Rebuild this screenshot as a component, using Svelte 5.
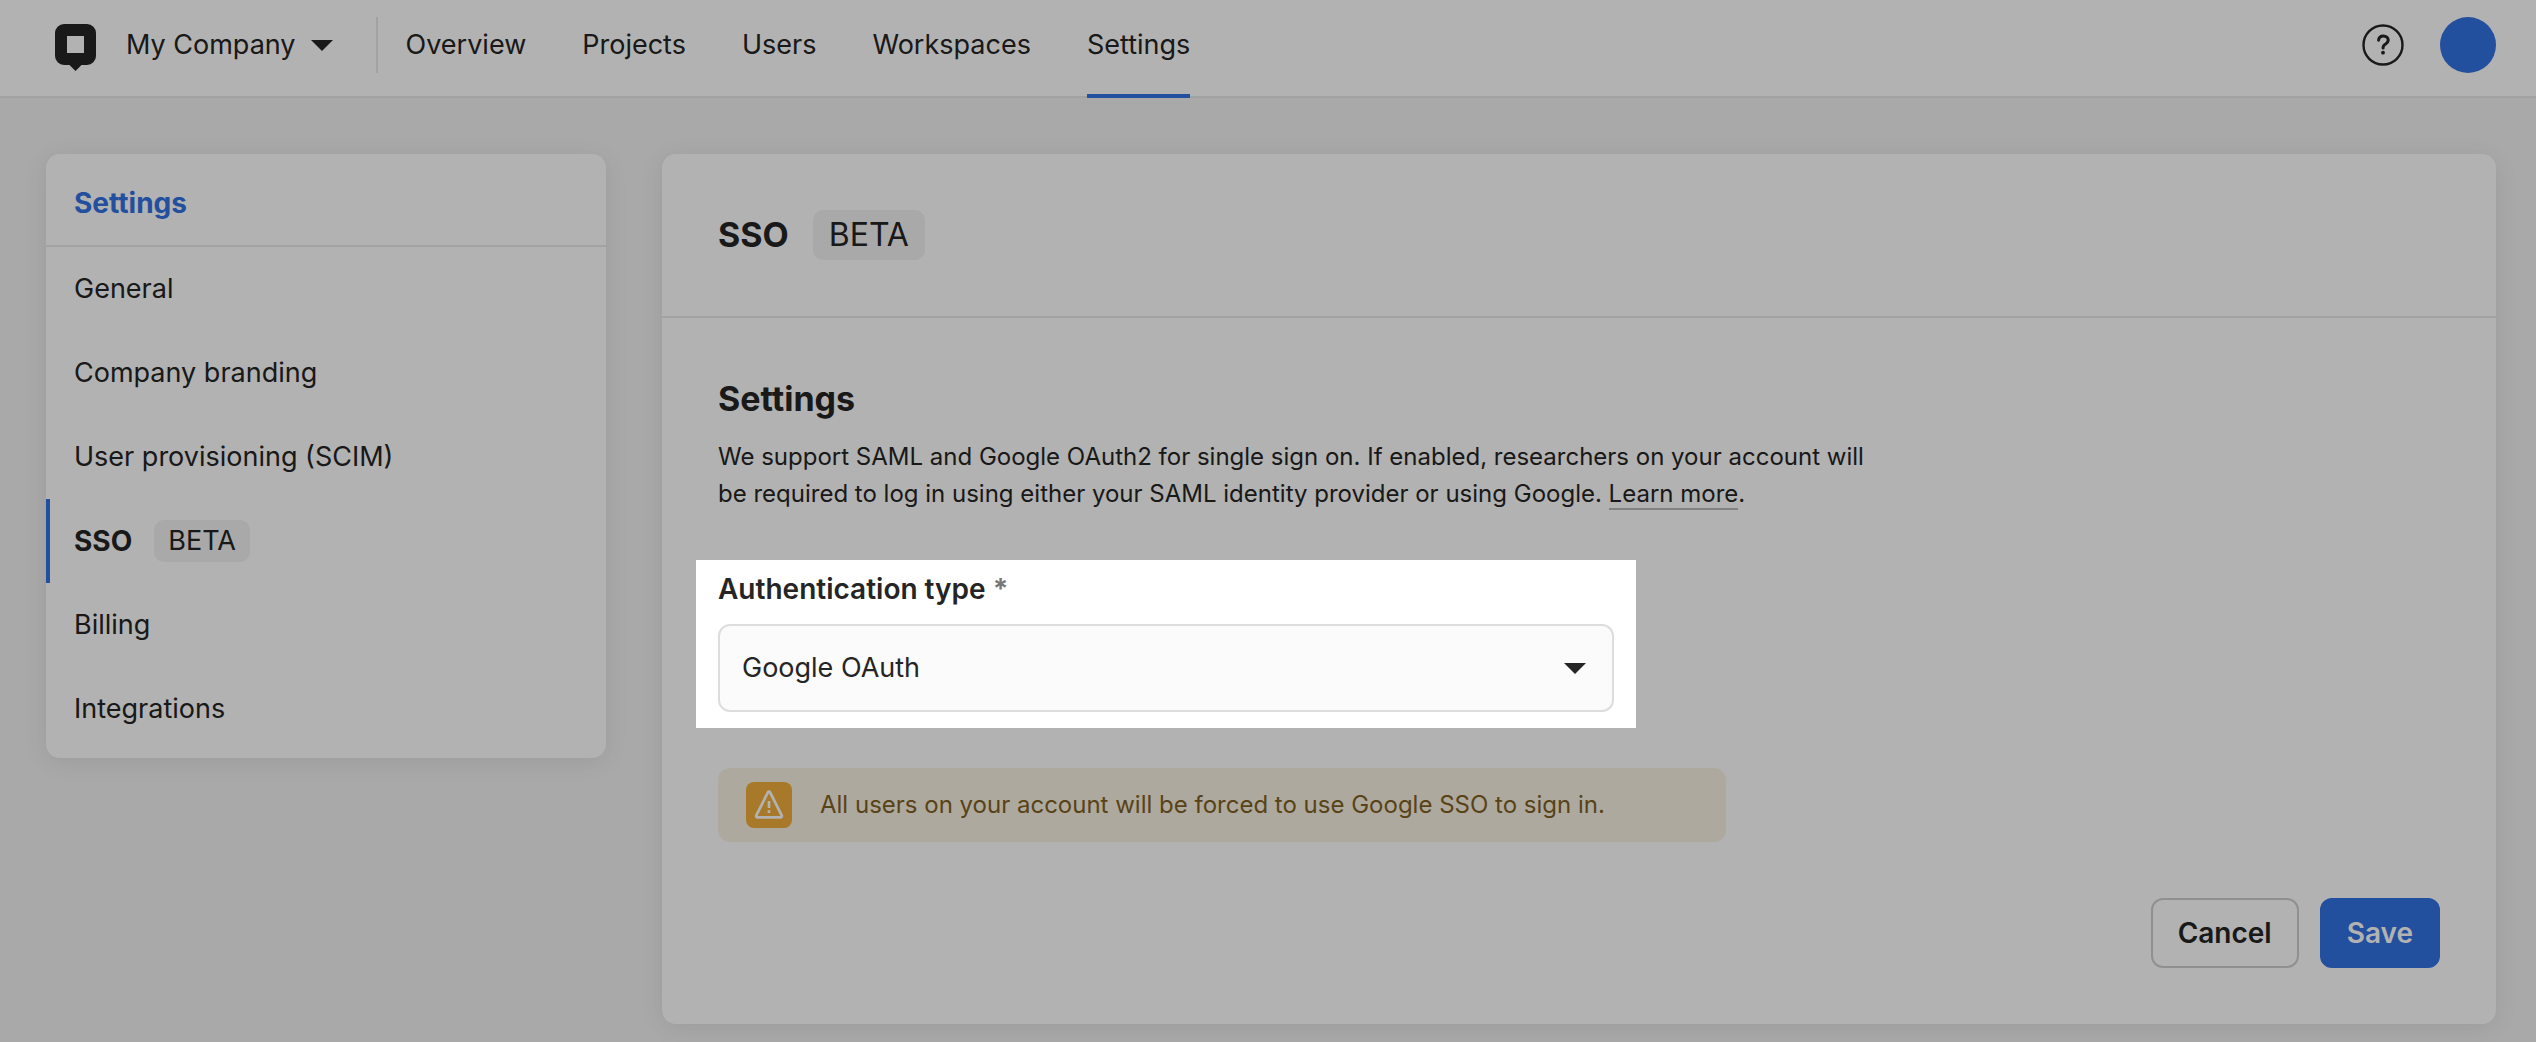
<script lang="ts">
  const tabs = ["Overview", "Projects", "Users", "Workspaces", "Settings"];
  const activeTab = "Settings";

  const sections = [
    { label: "General" },
    { label: "Company branding" },
    { label: "User provisioning (SCIM)" },
    { label: "SSO", beta: true },
    { label: "Billing" },
    { label: "Integrations" },
  ];
  const activeSection = "SSO";

  let authType = $state("google");
</script>

<header class="topbar">
  <a class="logo" href="#home" aria-label="Home">
    <svg width="41" height="54" viewBox="0 0 41 54" aria-hidden="true">
      <path
        fill="currentColor"
        fill-rule="evenodd"
        d="M9 6h23a9 9 0 0 1 9 9v23a9 9 0 0 1-9 9h-5.500l-6 6-6-6H9a9 9 0 0 1-9-9V15a9 9 0 0 1 9-9Zm3 12v17h17V18Z"
      />
    </svg>
  </a>
  <button class="company" type="button">
    My Company
    <svg width="22" height="11" viewBox="0 0 22 11" aria-hidden="true"><path fill="currentColor" d="M0 0h22L11 11Z" /></svg>
  </button>
  <nav class="tabs" aria-label="Main">
    {#each tabs as tab}
      <a href={`#${tab.toLowerCase()}`} class:active={tab === activeTab}>{tab}</a>
    {/each}
  </nav>
  <button class="help" type="button" aria-label="Help">
    <svg width="42" height="42" viewBox="0 0 42 42" fill="none" stroke="currentColor" aria-hidden="true">
      <circle cx="21" cy="21" r="19.500" stroke-width="2.400" />
      <path stroke-width="3" stroke-linecap="round" d="M16.600 16.200c.2-2.600 2.100-4.200 4.800-4.200 2.800 0 4.800 1.700 4.800 4.100 0 1.900-1 2.900-2.600 3.900-1.700 1-2.500 1.900-2.500 3.500v.4" />
      <circle cx="21" cy="28.700" r="1.900" fill="currentColor" stroke="none" />
    </svg>
  </button>
  <button class="avatar" type="button" aria-label="Account"></button>
</header>

<div class="page">
  <aside class="sidebar card">
    <h2>Settings</h2>
    <nav aria-label="Settings">
      {#each sections as section}
        <a href={`#${section.label}`} class:active={section.label === activeSection}>
          {section.label}
          {#if section.beta}<span class="badge">BETA</span>{/if}
        </a>
      {/each}
    </nav>
  </aside>

  <main class="card">
    <div class="card-head">
      <h1>SSO</h1>
      <span class="badge large">BETA</span>
    </div>

    <form class="card-body" onsubmit={(e) => e.preventDefault()}>
      <h2>Settings</h2>
      <p class="intro">
        We support SAML and Google OAuth2 for single sign on. If enabled, researchers on your account will be required
        to log in using either your SAML identity provider or using Google. <a href="#learn-more">Learn more</a>.
      </p>

      <div class="spotlight">
        <label for="auth-type">Authentication type <span class="required">*</span></label>
        <div class="select">
          <select id="auth-type" bind:value={authType}>
            <option value="google">Google OAuth</option>
            <option value="saml">SAML</option>
          </select>
          <svg width="22" height="11" viewBox="0 0 22 11" aria-hidden="true"><path fill="currentColor" d="M0 0h22L11 11Z" /></svg>
        </div>
      </div>

      <div class="notice" role="note">
        <span class="notice-icon">
          <svg width="30" height="30" viewBox="0 0 30 30" fill="none" stroke="currentColor" aria-hidden="true">
            <path
              stroke-width="2.700"
              stroke-linejoin="round"
              d="M14 2.200 2.300 25.400a1.300 1.300 0 0 0 1.200 1.900h23a1.300 1.300 0 0 0 1.200-1.900L16 2.200a1.100 1.100 0 0 0-2 0Z"
            />
            <path stroke-width="2.700" d="M15 11v7M15 20.300v2.700" />
          </svg>
        </span>
        All users on your account will be forced to use Google SSO to sign in.
      </div>

      <div class="actions">
        <button class="button" type="button">Cancel</button>
        <button class="button primary" type="submit">Save</button>
      </div>
    </form>
  </main>
</div>

<style>
  :global(body) {
    --text: #252525;
    --blue: #3271e3;
    --line: #e8e8e8;
    background: #f2f2f2;
    color: var(--text);
    font: 27px/42px Inter, "Liberation Sans", sans-serif;
  }

  h1,
  h2,
  p {
    margin: 0;
  }

  a {
    color: inherit;
    text-decoration: none;
  }

  button,
  select {
    color: inherit;
    font: inherit;
  }

  button {
    padding: 0;
    border: 0;
    background: none;
    cursor: pointer;
  }

  svg {
    display: block;
    flex: none;
  }

  .topbar {
    display: flex;
    align-items: center;
    height: 90px;
    padding: 0 40px 6px 55px;
    border-bottom: 2px solid var(--line);
    background: #fff;
  }

  .logo {
    margin-right: 30px;
  }

  .company {
    display: flex;
    align-items: center;
    gap: 15px;
    height: 56px;
    padding-right: 43px;
    border-right: 2px solid var(--line);
  }

  .tabs {
    display: flex;
    align-self: stretch;
    gap: 56px;
    margin: 0 auto -8px 28px;
  }

  .tabs a {
    display: flex;
    align-items: center;
    padding-bottom: 4px;
    border-bottom: 4px solid transparent;
  }

  .tabs .active {
    border-color: var(--blue);
  }

  .avatar {
    width: 56px;
    height: 56px;
    margin-left: 36px;
    border-radius: 50%;
    background: var(--blue);
  }

  .page {
    display: grid;
    grid-template-columns: 560px minmax(0, 1fr);
    align-items: start;
    gap: 56px;
    padding: 56px 40px 18px 46px;
  }

  .card {
    border-radius: 14px;
    background: #fff;
    box-shadow: 0 4px 24px rgb(0 0 0 / 8%);
  }

  .sidebar {
    padding-bottom: 7px;
  }

  .sidebar h2 {
    padding: 28px 28px 21px;
    border-bottom: 2px solid var(--line);
    color: var(--blue);
    font-size: 28px;
    font-weight: 700;
  }

  .sidebar nav a {
    display: flex;
    align-items: center;
    gap: 22px;
    height: 84px;
    padding: 0 24px;
    border-left: 4px solid transparent;
  }

  .sidebar nav .active {
    border-color: var(--blue);
    font-size: 28px;
    font-weight: 700;
  }

  .badge {
    padding: 0 14px;
    border-radius: 10px;
    background: #f2f2f2;
    font-size: 27px;
    font-weight: 400;
  }

  .badge.large {
    padding: 0 16px;
    font-size: 32px;
    line-height: 50px;
  }

  .card-head {
    display: flex;
    align-items: center;
    gap: 24px;
    padding: 56px;
    border-bottom: 2px solid var(--line);
  }

  h1,
  .card-body h2 {
    font-size: 34px;
    font-weight: 700;
    line-height: 50px;
  }

  .card-body {
    padding: 56px;
  }

  .intro {
    max-width: 1180px;
    margin-top: 14px;
    font-size: 24px;
    line-height: 37px;
  }

  .intro a {
    border-bottom: 2px solid #bababa;
  }

  /* everything outside the highlighted field is dimmed */
  .spotlight {
    position: relative;
    z-index: 1;
    box-sizing: border-box;
    max-width: 940px;
    margin: 48px 0 40px -22px;
    padding: 8px 22px 16px;
    background: #fff;
    box-shadow: 0 0 0 9999px rgb(0 0 0 / 30%);
  }

  .spotlight label {
    display: block;
    margin-bottom: 14px;
    font-size: 28px;
    font-weight: 600;
  }

  .required {
    color: #777;
    font-weight: 700;
  }

  .select {
    display: grid;
    align-items: center;
  }

  .select > * {
    grid-area: 1 / 1;
  }

  .select svg {
    justify-self: end;
    margin-right: 28px;
    pointer-events: none;
  }

  .select select {
    width: 100%;
    height: 88px;
    padding: 0 22px;
    border: 2px solid #ddd;
    border-radius: 12px;
    background: #fbfbfb;
    appearance: none;
  }

  .notice {
    display: flex;
    align-items: center;
    gap: 28px;
    box-sizing: border-box;
    max-width: 1008px;
    padding: 14px 28px;
    border-radius: 12px;
    background: #faf3e2;
    color: #7f6125;
    font-size: 24px;
  }

  .notice-icon {
    display: grid;
    place-items: center;
    width: 46px;
    height: 46px;
    border-radius: 8px;
    background: #f0ae3b;
    color: #fff;
  }

  .actions {
    display: flex;
    justify-content: flex-end;
    gap: 21px;
    margin-top: 56px;
  }

  .button {
    height: 70px;
    padding: 0 25px;
    border: 2px solid #cfcfcf;
    border-radius: 12px;
    font-size: 28px;
    font-weight: 600;
  }

  .button.primary {
    border-color: var(--blue);
    background: var(--blue);
    color: #fff;
  }
</style>
